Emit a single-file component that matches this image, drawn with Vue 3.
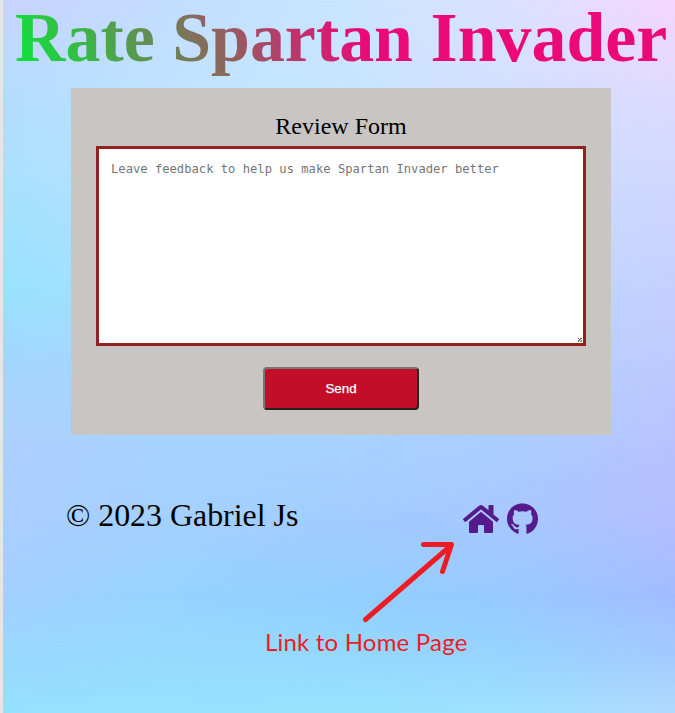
<script setup>
import { ref } from 'vue'

const feedback = ref('')

// Rows of the backdrop mesh: each row fades into the next one down the page.
const rows = [
  { y: 0, colors: ['#c9d3ff', '#c4ddff', '#cae5ff', '#dbe2ff', '#f6d5fd'] },
  { y: 90, colors: ['#b4dcff', '#c0e3ff', '#c6e5ff', '#d3e0ff', '#dfdaff'] },
  { y: 180, colors: ['#a9e1ff', '#b8e2ff', '#c0e0ff', '#cadcff', '#d0d8ff'] },
  { y: 290, colors: ['#99e2ff', '#a8dfff', '#b0dcff', '#bcd8ff', '#c5d0ff'] },
  { y: 360, colors: ['#a2d6ff', '#a8d8ff', '#acd7ff', '#b2d3ff', '#bfcaff'] },
  { y: 440, colors: ['#aed0ff', '#a7d3ff', '#a7d2ff', '#abcdff', '#b8c3ff'] },
  { y: 520, colors: ['#aaceff', '#a3d0ff', '#a2cdff', '#a7c8ff', '#b3beff'] },
  { y: 595, colors: ['#a2d0ff', '#97d3ff', '#93cfff', '#97c9ff', '#a3bdff'] },
  { y: 650, colors: ['#9ad7ff', '#97daff', '#94d8ff', '#97d3ff', '#a3caff'] },
  { y: 713, colors: ['#95e0ff', '#96e2ff', '#97e3ff', '#9fe1ff', '#b0daff'] },
]

function rowStyle(row, i) {
  const style = { backgroundImage: `linear-gradient(90deg, ${row.colors.join(', ')})` }
  if (i > 0) {
    style.maskImage = `linear-gradient(180deg, transparent ${rows[i - 1].y}px, #000 ${row.y}px)`
  }
  return style
}
</script>

<template>
  <div class="page">
    <div class="backdrop" aria-hidden="true">
      <div v-for="(row, i) in rows" :key="row.y" class="mesh" :style="rowStyle(row, i)"></div>
    </div>

    <h1 class="title">Rate Spartan Invader</h1>

    <form class="review" @submit.prevent>
      <label class="label" for="feedback">Review Form</label>
      <textarea
        id="feedback"
        v-model="feedback"
        class="field"
        placeholder="Leave feedback to help us make Spartan Invader better"
      ></textarea>
      <button class="send" type="submit">Send</button>
    </form>

    <footer class="footer">
      <p class="copy">© 2023 Gabriel Js</p>
      <nav class="links">
        <a href="#home" aria-label="Home">
          <svg class="home" viewBox="0 0 576 512">
            <path d="M280.37 148.26 96 300.11V464a16 16 0 0 0 16 16l112.06-.29a16 16 0 0 0 15.92-16V368a16 16 0 0 1 16-16h64a16 16 0 0 1 16 16v95.64a16 16 0 0 0 16 16.05L464 480a16 16 0 0 0 16-16V300L295.67 148.26a12.19 12.19 0 0 0-15.3 0zM571.6 251.47 488 182.56V44.05a12 12 0 0 0-12-12h-56a12 12 0 0 0-12 12v72.61L318.47 43a48 48 0 0 0-61 0L4.34 251.47a12 12 0 0 0-1.6 16.9l25.5 31A12 12 0 0 0 45.15 301l235.22-193.74a12.19 12.19 0 0 1 15.3 0L530.9 301a12 12 0 0 0 16.9-1.6l25.5-31a12 12 0 0 0-1.7-16.93z" />
          </svg>
        </a>
        <a href="#github" aria-label="GitHub">
          <svg class="github" viewBox="0 0 496 512">
            <path d="M165.9 397.4c0 2-2.3 3.6-5.2 3.6-3.3.3-5.6-1.3-5.6-3.6 0-2 2.3-3.6 5.2-3.6 3-.3 5.6 1.3 5.6 3.6zM244.8 8C106.1 8 0 113.3 0 252c0 110.9 69.8 205.8 169.5 239.2 12.8 2.3 17.3-5.6 17.3-12.1 0-6.2-.3-40.4-.3-61.4 0 0-70 15-84.7-29.8 0 0-11.4-29.1-27.8-36.6 0 0-22.9-15.7 1.6-15.4 0 0 24.9 2 38.6 25.8 21.9 38.6 58.6 27.5 72.9 20.9 2.3-16 8.8-27.1 16-33.7-55.9-6.2-112.3-14.3-112.3-110.5 0-27.5 7.6-41.3 23.6-58.9-2.6-6.5-11.1-33.3 2.6-67.9 20.9-6.5 69 27 69 27 20-5.6 41.5-8.5 62.8-8.5s42.8 2.9 62.8 8.5c0 0 48.1-33.6 69-27 13.7 34.7 5.2 61.4 2.6 67.9 16 17.7 25.8 31.5 25.8 58.9 0 96.5-58.9 104.2-114.8 110.5 9.2 7.9 17 22.9 17 46.4 0 33.7-.3 75.4-.3 83.6 0 6.5 4.6 14.4 17.3 12.1C428.2 457.8 496 362.9 496 252 496 113.3 383.5 8 244.8 8z" />
          </svg>
        </a>
      </nav>
    </footer>

    <div class="note">
      <svg class="arrow" viewBox="0 0 100 90">
        <path d="M6.5 81.5 92 7.5M64.5 6.5H92.5L83.5 33.5" />
      </svg>
      <span class="note-text">Link to Home Page</span>
    </div>
  </div>
</template>

<style>
body {
  margin: 0;
  overflow: hidden;
}
</style>

<style scoped>
.page {
  position: relative;
  isolation: isolate;
  box-sizing: border-box;
  width: 675px;
  height: 713px;
  border-left: 3px solid #e5e5e5;
  overflow: hidden;
  font-family: "Liberation Serif", "Times New Roman", serif;
  color: #000;
}

.backdrop,
.mesh {
  position: absolute;
  inset: 0;
}

.backdrop {
  z-index: -1;
}

.title {
  width: max-content;
  margin: 0 0 0 12px;
  height: 88px;
  font-size: 69.9px;
  line-height: 76px;
  font-weight: 700;
  white-space: nowrap;
  background: linear-gradient(65deg, #14dc3c 4%, #eb0878 54%);
  background-clip: text;
  -webkit-background-clip: text;
  color: transparent;
}

.review {
  box-sizing: border-box;
  display: flex;
  flex-direction: column;
  align-items: center;
  width: 540px;
  height: 347px;
  margin-left: 68px;
  padding: 25px 25px 0;
  background: #c9c5c2;
}

.label {
  font-size: 24px;
  line-height: 27px;
  height: 33px;
}

.field {
  box-sizing: border-box;
  display: block;
  width: 490px;
  height: 200px;
  padding: 12px;
  border: 3px solid #932124;
  border-radius: 0;
  outline: none;
  background: #fff;
  font: 12.16px/16px "DejaVu Sans Mono", monospace;
}

.field::placeholder {
  color: #757575;
}

.field::-webkit-resizer {
  background: repeating-linear-gradient(135deg, #777 0 0.8px, #fff 0.8px 2.1px) right 1px bottom 1px / 4px 4px no-repeat;
}

.send {
  width: 156px;
  height: 43px;
  margin-top: 21px;
  padding: 0;
  border: 2px solid;
  border-color: #767676 #212121 #212121 #767676;
  border-radius: 4px;
  background: #c20e29;
  color: #fff;
  font: 13.333px "Liberation Sans", Arial, sans-serif;
  -webkit-text-stroke: 0.25px #fff;
}

.footer {
  display: flex;
  align-items: flex-start;
  justify-content: space-between;
  width: 472px;
  margin: 61px 0 0 63px;
}

.copy {
  margin: 0;
  padding-top: 1px;
  font-size: 31.9px;
  line-height: 38px;
}

.links {
  display: flex;
  gap: 8px;
  padding-top: 7px;
}

.links a {
  display: block;
  color: #551a8b;
}

.links svg {
  display: block;
  fill: currentColor;
}

.home {
  width: 36px;
  height: 32px;
}

.github {
  width: 31px;
  height: 32px;
}

.note {
  position: absolute;
  left: 262px;
  top: 538px;
  display: flex;
  flex-direction: column;
  color: #ed1c24;
}

.arrow {
  width: 100px;
  height: 90px;
  margin-left: 94px;
  fill: none;
  stroke: currentColor;
  stroke-width: 5;
  stroke-linecap: round;
  stroke-linejoin: round;
}

.note-text {
  font: 24px/28px Lato, sans-serif;
  letter-spacing: 0.2px;
  white-space: nowrap;
}
</style>
